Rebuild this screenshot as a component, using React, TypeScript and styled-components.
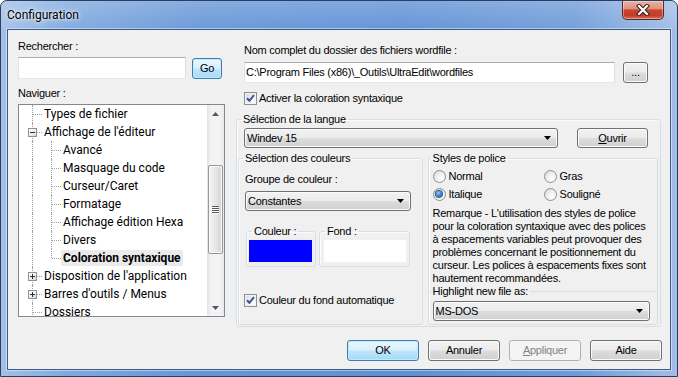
import React from "react";
import styled, { createGlobalStyle, css } from "styled-components";

const GlobalStyle = createGlobalStyle`
  *, *::before, *::after { box-sizing: border-box; }
  html, body { margin: 0; padding: 0; background: #ffffff; }
  body { font-family: "Liberation Sans", Arial, sans-serif; }
  #root { width: 678px; height: 377px; }
`;

type TreeItem = {
  label: string;
  level: 0 | 1;
  kind: "leaf" | "open" | "closed";
  last?: boolean;
  selected?: boolean;
};

const treeRows: TreeItem[] = [
  { label: "Types de fichier", level: 0, kind: "leaf" },
  { label: "Affichage de l'éditeur", level: 0, kind: "open" },
  { label: "Avancé", level: 1, kind: "leaf" },
  { label: "Masquage du code", level: 1, kind: "leaf" },
  { label: "Curseur/Caret", level: 1, kind: "leaf" },
  { label: "Formatage", level: 1, kind: "leaf" },
  { label: "Affichage édition Hexa", level: 1, kind: "leaf" },
  { label: "Divers", level: 1, kind: "leaf" },
  { label: "Coloration syntaxique", level: 1, kind: "leaf", last: true, selected: true },
  { label: "Disposition de l'application", level: 0, kind: "closed" },
  { label: "Barres d'outils / Menus", level: 0, kind: "closed" },
  { label: "Dossiers", level: 0, kind: "leaf" },
];

const remarque = [
  "Remarque - L'utilisation des styles de police",
  "pour la coloration syntaxique avec des polices",
  "à espacements variables peut provoquer des",
  "problèmes concernant le positionnement du",
  "curseur. Les polices à espacements fixes sont",
  "hautement recommandées.",
];

const App = () => {
  return (
    <>
      <GlobalStyle />
      <Window>
        <TitleBar>
          <Title>Configuration</Title>
          <CloseButton>
            <svg width="14" height="12" viewBox="0 0 14 12">
              <path d="M3 2 L11 10 M11 2 L3 10" stroke="#3a1d17" strokeWidth="4.2" strokeLinecap="square" />
              <path d="M3 2 L11 10 M11 2 L3 10" stroke="#ffffff" strokeWidth="2.2" strokeLinecap="square" />
            </svg>
          </CloseButton>
        </TitleBar>

        <Client>
          <MainRow>
            <LeftColumn>
              <Label>Rechercher :</Label>
              <SearchRow>
                <TextBox $w={168} $h={22} />
                <PushButton $w={30} $h={21} $default>
                  Go
                </PushButton>
              </SearchRow>
              <Label $top={8}>Naviguer :</Label>
              <Tree>
                <TreeBody>
                  {treeRows.map((row) => (
                    <TreeRow key={row.label}>
                      {row.level === 1 && <Guide $line="full" />}
                      <Guide $line={row.last ? "top" : "full"} $branch>
                        {row.kind !== "leaf" && (
                          <Expander>
                            <svg width="7" height="7" viewBox="0 0 7 7">
                              <path d="M1 3.5 H6" stroke="#1f2f46" strokeWidth="1" />
                              {row.kind === "closed" && <path d="M3.5 1 V6" stroke="#1f2f46" strokeWidth="1" />}
                            </svg>
                          </Expander>
                        )}
                      </Guide>
                      <NodeLabel $selected={row.selected}>{row.label}</NodeLabel>
                    </TreeRow>
                  ))}
                </TreeBody>
                <ScrollBar>
                  <ScrollArrow>
                    <svg width="7" height="4" viewBox="0 0 7 4">
                      <polygon points="0,4 7,4 3.5,0" fill="#4d5a6e" />
                    </svg>
                  </ScrollArrow>
                  <ScrollThumb>
                    <svg width="7" height="8" viewBox="0 0 7 8">
                      <path d="M0 0.5 H7 M0 2.5 H7 M0 4.5 H7 M0 6.5 H7" stroke="#5d5d5d" strokeWidth="1" />
                      <path d="M0 1.5 H7 M0 3.5 H7 M0 5.5 H7 M0 7.5 H7" stroke="#f8f8f8" strokeWidth="1" />
                    </svg>
                  </ScrollThumb>
                  <ScrollSpacer />
                  <ScrollArrow>
                    <svg width="7" height="4" viewBox="0 0 7 4">
                      <polygon points="0,0 7,0 3.5,4" fill="#4d5a6e" />
                    </svg>
                  </ScrollArrow>
                </ScrollBar>
              </Tree>
            </LeftColumn>

            <RightColumn>
              <Label $top={4} $left={8}>
                Nom complet du dossier des fichiers wordfile :
              </Label>
              <PathRow>
                <TextBox $w={371} $h={21}>
                  C:\Program Files (x86)\_Outils\UltraEdit\wordfiles
                </TextBox>
                <PushButton $w={25} $h={21}>
                  ...
                </PushButton>
              </PathRow>
              <CheckRow $top={9} $left={8}>
                <CheckBox>
                  <CheckMark />
                </CheckBox>
                <span>Activer la coloration syntaxique</span>
              </CheckRow>

              <Group $top={8}>
                <Legend $offset={4}>Sélection de la langue</Legend>
                <LanguageRow>
                  <Combo $w={314}>
                    <span>Windev 15</span>
                    <ComboArrow />
                  </Combo>
                  <PushButton $w={71} $h={20}>
                    <u>O</u>uvrir
                  </PushButton>
                </LanguageRow>

                <InnerRow>
                  <Group $w={185}>
                    <Legend $offset={4}>Sélection des couleurs</Legend>
                    <GroupContent $left={6}>
                      <Label $top={8}>Groupe de couleur :</Label>
                      <Combo $w={166} $top={5}>
                        <span>Constantes</span>
                        <ComboArrow />
                      </Combo>
                      <SwatchRow>
                        <Group $w={70}>
                          <Legend $offset={5}>Couleur :</Legend>
                          <Swatch $color="#0000ff" $left={2} />
                        </Group>
                        <Group $w={91}>
                          <Legend $offset={5}>Fond :</Legend>
                          <Swatch $color="#ffffff" $left={4} />
                        </Group>
                      </SwatchRow>
                      <CheckRow $top={27} $left={-1}>
                        <CheckBox>
                          <CheckMark />
                        </CheckBox>
                        <span>Couleur du fond automatique</span>
                      </CheckRow>
                    </GroupContent>
                  </Group>

                  <Group $w={231}>
                    <Legend $offset={2}>Styles de police</Legend>
                    <GroupContent $left={4}>
                      <RadioGrid>
                        <RadioItem>
                          <RadioCircle />
                          <span>Normal</span>
                        </RadioItem>
                        <RadioItem>
                          <RadioCircle />
                          <span>Gras</span>
                        </RadioItem>
                        <RadioItem>
                          <RadioCircle>
                            <RadioDot />
                          </RadioCircle>
                          <span>Italique</span>
                        </RadioItem>
                        <RadioItem>
                          <RadioCircle />
                          <span>Souligné</span>
                        </RadioItem>
                      </RadioGrid>
                      <Note>
                        {remarque.map((line) => (
                          <div key={line}>{line}</div>
                        ))}
                      </Note>
                    </GroupContent>
                    <HighlightGroup>
                      <Legend $offset={2}>Highlight new file as:</Legend>
                      <Combo $w={217} $top={3} $left={4}>
                        <span>MS-DOS</span>
                        <ComboArrow />
                      </Combo>
                    </HighlightGroup>
                  </Group>
                </InnerRow>
              </Group>
            </RightColumn>
          </MainRow>

          <ButtonRow>
            <PushButton $w={72} $h={21} $default>
              OK
            </PushButton>
            <PushButton $w={72} $h={21}>
              Annuler
            </PushButton>
            <PushButton $w={72} $h={21} disabled>
              <u>A</u>ppliquer
            </PushButton>
            <PushButton $w={72} $h={21}>
              Aide
            </PushButton>
          </ButtonRow>
        </Client>
      </Window>
    </>
  );
};

export default App;

const ComboArrow = () => (
  <svg width="7" height="4" viewBox="0 0 7 4">
    <polygon points="0,0 7,0 3.5,4" fill="#000000" />
  </svg>
);

const CheckMark = () => (
  <svg width="11" height="11" viewBox="0 0 11 11">
    <polyline points="2,5.2 4.4,7.8 9,2.2" fill="none" stroke="#3a5595" strokeWidth="2" />
  </svg>
);

const Window = styled.div`
  width: 678px;
  height: 377px;
  border: 1px solid #27405f;
  border-radius: 7px 7px 0 0;
  padding: 0 6px 6px;
  display: flex;
  flex-direction: column;
  overflow: hidden;
  background:
    linear-gradient(180deg, rgba(255, 255, 255, 0.22) 0px, rgba(255, 255, 255, 0.06) 27px, rgba(255, 255, 255, 0) 28px),
    linear-gradient(90deg, #a3c0e7 0%, #7fa8de 10%, #6595d7 30%, #5e90d5 60%, #6e9bd9 85%, #a2bee5 100%);
`;

const TitleBar = styled.div`
  height: 28px;
  display: flex;
  align-items: flex-start;
`;

const Title = styled.span`
  font-family: Roboto, "Liberation Sans", sans-serif;
  font-size: 12px;
  line-height: 28px;
  color: #000000;
  text-shadow: 0 0 6px rgba(255, 255, 255, 0.95), 0 0 3px rgba(255, 255, 255, 0.9);
`;

const CloseButton = styled.div`
  margin-left: auto;
  margin-right: 7px;
  width: 42px;
  height: 19px;
  border: 1px solid #5a2a22;
  border-top: none;
  border-radius: 0 0 5px 5px;
  display: flex;
  align-items: center;
  justify-content: center;
  background: linear-gradient(180deg, #eab0a3 0%, #df9280 42%, #c8472f 50%, #c23d27 80%, #d8745b 100%);
  box-shadow: inset 0 0 0 1px rgba(255, 255, 255, 0.35);
`;

const Client = styled.div`
  flex: 1;
  display: flex;
  flex-direction: column;
  background: #f0f0f0;
  border: 1px solid #3b5a85;
  box-shadow: 0 0 0 1px rgba(255, 255, 255, 0.45);
  padding: 10px 8px 8px 10px;
  font-family: "Liberation Sans", Arial, sans-serif;
  font-size: 11px;
  letter-spacing: -0.25px;
  line-height: 13px;
  color: #000000;
`;

const MainRow = styled.div`
  display: flex;
  gap: 11px;
`;

const LeftColumn = styled.div`
  width: 207px;
  display: flex;
  flex-direction: column;
`;

const RightColumn = styled.div`
  width: 425px;
  display: flex;
  flex-direction: column;
`;

const Label = styled.div<{ $top?: number; $left?: number }>`
  height: 13px;
  white-space: nowrap;
  margin-top: ${(p) => p.$top ?? 0}px;
  margin-left: ${(p) => p.$left ?? 0}px;
`;

const SearchRow = styled.div`
  display: flex;
  align-items: center;
  gap: 6px;
  margin-top: 4px;
`;

const PathRow = styled.div`
  display: flex;
  align-items: center;
  gap: 8px;
  margin-top: 5px;
  padding-left: 8px;
`;

const TextBox = styled.div<{ $w: number; $h: number }>`
  width: ${(p) => p.$w}px;
  height: ${(p) => p.$h}px;
  background: #ffffff;
  border: 1px solid;
  border-color: #abadb3 #dbdfe6 #e3e9ef #e2e3ea;
  padding-left: 1px;
  display: flex;
  align-items: center;
  white-space: nowrap;
  overflow: hidden;
`;

const buttonFace = css`
  border: 1px solid #707070;
  border-radius: 3px;
  background: linear-gradient(180deg, #f2f2f2 0%, #ebebeb 48%, #dddddd 52%, #cfcfcf 100%);
  box-shadow: inset 0 0 0 1px #fbfbfb;
`;

const PushButton = styled.button<{ $w: number; $h: number; $default?: boolean }>`
  ${buttonFace};
  width: ${(p) => p.$w}px;
  height: ${(p) => p.$h}px;
  flex: none;
  padding: 0;
  font: inherit;
  letter-spacing: inherit;
  color: #000000;
  display: flex;
  align-items: center;
  justify-content: center;

  ${(p) =>
    p.$default &&
    css`
      border-color: #3c7fb1;
      background: linear-gradient(180deg, #eaf6fd 0%, #d9f0fc 48%, #bee6fd 52%, #a7d9f5 100%);
      box-shadow: inset 0 0 0 1px #c4e8fa;
    `}

  &:disabled {
    border-color: #adb2b5;
    background: #f4f4f4;
    box-shadow: none;
    color: #838383;
  }
`;

const Tree = styled.div`
  margin-top: 4px;
  width: 207px;
  height: 213px;
  border: 1px solid #828790;
  background: #ffffff;
  display: flex;
`;

const TreeBody = styled.div`
  flex: 1;
  overflow: hidden;
  padding-left: 4px;
  font-family: Roboto, "Liberation Sans", sans-serif;
  font-size: 12px;
  letter-spacing: 0;
`;

const TreeRow = styled.div`
  height: 18px;
  display: flex;
  align-items: center;
`;

const Guide = styled.span<{ $line: "full" | "top"; $branch?: boolean }>`
  position: relative;
  flex: none;
  width: 19px;
  height: 18px;

  &::before {
    content: "";
    position: absolute;
    left: 9px;
    top: 0;
    height: ${(p) => (p.$line === "top" ? 9 : 18)}px;
    border-left: 1px dotted #a0a0a0;
  }

  &::after {
    content: "";
    display: ${(p) => (p.$branch ? "block" : "none")};
    position: absolute;
    left: 10px;
    top: 9px;
    width: 9px;
    border-top: 1px dotted #a0a0a0;
  }
`;

const Expander = styled.span`
  position: absolute;
  z-index: 1;
  left: 5px;
  top: 5px;
  width: 9px;
  height: 9px;
  border: 1px solid #919191;
  background: linear-gradient(135deg, #ffffff 0%, #f2f2f2 50%, #d6d6d6 100%);
  display: flex;
`;

const NodeLabel = styled.span<{ $selected?: boolean }>`
  height: 16px;
  line-height: 16px;
  padding: 0 2px;
  white-space: nowrap;
  color: #000000;
  font-weight: ${(p) => (p.$selected ? 700 : 400)};
  background: ${(p) => (p.$selected ? "#ebebeb" : "transparent")};
`;

const ScrollBar = styled.div`
  width: 17px;
  flex: none;
  display: flex;
  flex-direction: column;
  background: linear-gradient(90deg, #e3e3e3 0%, #f3f3f3 25%, #f3f3f3 75%, #e9e9e9 100%);
`;

const ScrollArrow = styled.div`
  height: 17px;
  display: flex;
  align-items: center;
  justify-content: center;
`;

const ScrollThumb = styled.div`
  margin: 43px 1px 0 1px;
  height: 89px;
  border: 1px solid #979797;
  border-radius: 2px;
  background: linear-gradient(90deg, #f4f4f4 0%, #e6e6e6 50%, #d3d3d3 100%);
  box-shadow: inset 0 0 0 1px #fafafa;
  display: flex;
  align-items: center;
  justify-content: center;
`;

const ScrollSpacer = styled.div`
  flex: 1;
`;

const CheckRow = styled.div<{ $top: number; $left: number }>`
  display: flex;
  align-items: center;
  gap: 2px;
  height: 13px;
  margin-top: ${(p) => p.$top}px;
  margin-left: ${(p) => p.$left}px;
  white-space: nowrap;
`;

const CheckBox = styled.span`
  width: 13px;
  height: 13px;
  flex: none;
  border: 1px solid #8e8f8f;
  background: linear-gradient(135deg, #dadada 0%, #f4f4f4 60%, #ffffff 100%);
  box-shadow: inset 0 0 0 1px #f2f2f2;
  display: flex;
`;

const Group = styled.fieldset<{ $top?: number; $w?: number }>`
  margin: ${(p) => p.$top ?? 0}px 0 0 0;
  padding: 0;
  min-width: 0;
  ${(p) => p.$w && `width: ${p.$w}px;`}
  border: 1px solid #d5dfe5;
  border-radius: 3px;
  box-shadow: inset 1px 1px 0 #fbfbfb;
`;

const Legend = styled.legend<{ $offset: number }>`
  margin-left: ${(p) => p.$offset}px;
  padding: 0 2px;
  line-height: 13px;
  height: 13px;
  white-space: nowrap;
`;

const LanguageRow = styled.div`
  display: flex;
  align-items: center;
  gap: 19px;
  margin-top: 2px;
  padding-left: 7px;
`;

const InnerRow = styled.div`
  display: flex;
  gap: 5px;
  margin-top: 4px;
  padding: 0 2px 1px 1px;
`;

const GroupContent = styled.div<{ $left: number }>`
  display: flex;
  flex-direction: column;
  padding-left: ${(p) => p.$left}px;
`;

const Combo = styled.div<{ $w: number; $top?: number; $left?: number }>`
  ${buttonFace};
  width: ${(p) => p.$w}px;
  height: 20px;
  margin-top: ${(p) => p.$top ?? 0}px;
  margin-left: ${(p) => p.$left ?? 0}px;
  flex: none;
  display: flex;
  align-items: center;
  justify-content: space-between;
  padding: 0 6px 0 2px;
  white-space: nowrap;
`;

const SwatchRow = styled.div`
  display: flex;
  gap: 3px;
  margin-top: 14px;
  margin-left: 1px;
`;

const Swatch = styled.div<{ $color: string; $left: number }>`
  height: 22px;
  margin: 2px 3px 4px ${(p) => p.$left}px;
  background: ${(p) => p.$color};
`;

const RadioGrid = styled.div`
  display: grid;
  grid-template-columns: 111px auto;
  grid-auto-rows: 18px;
  margin-top: 2px;
`;

const RadioItem = styled.div`
  display: flex;
  align-items: center;
  gap: 3px;
`;

const RadioCircle = styled.span`
  width: 13px;
  height: 13px;
  flex: none;
  border-radius: 50%;
  border: 1px solid #8e8f8f;
  background: radial-gradient(circle at 65% 70%, #ffffff 0%, #f0f0f0 45%, #d2d2d2 100%);
  display: flex;
  align-items: center;
  justify-content: center;
`;

const RadioDot = styled.span`
  width: 6px;
  height: 6px;
  border-radius: 50%;
  background: radial-gradient(circle at 40% 35%, #9fd0f5 0%, #3f86d0 45%, #1c4f92 100%);
  box-shadow: 0 0 0 1px #2a5796;
`;

const Note = styled.div`
  margin-top: 4px;
  white-space: nowrap;
  line-height: 13px;
`;

const HighlightGroup = styled.fieldset`
  margin: 0;
  padding: 0 0 3px 0;
  min-width: 0;
  border: none;
  border-top: 1px solid #d5dfe5;
`;

const ButtonRow = styled.div`
  margin-top: auto;
  display: flex;
  justify-content: flex-end;
  gap: 9px;
`;
